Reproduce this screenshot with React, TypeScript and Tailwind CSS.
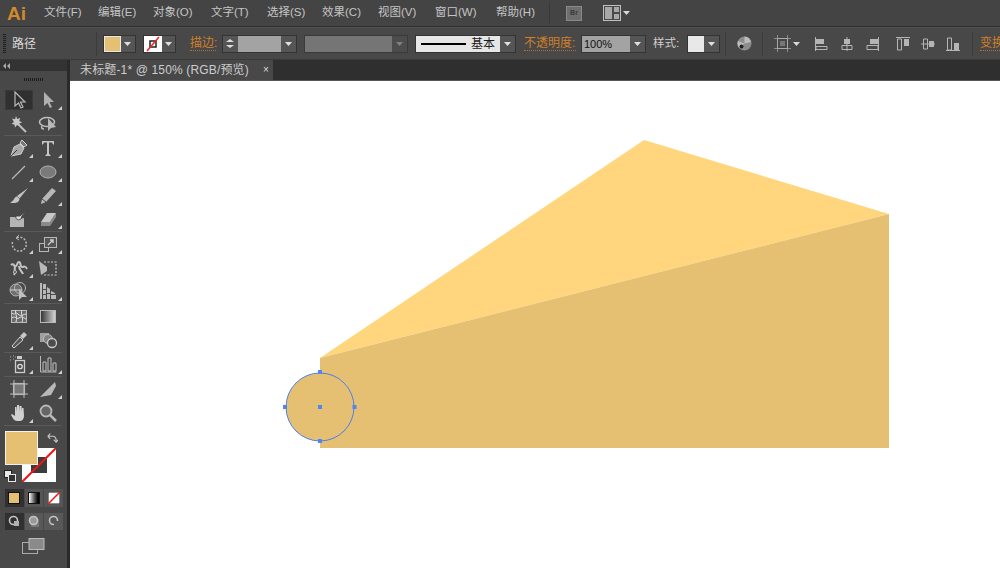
import React from "react";

const FONT = { fontFamily: '"Liberation Sans","Noto Sans CJK SC",sans-serif' };

function Menu({ label, w }: { label: string; w: string }) {
  return <span className={`${w} shrink-0 text-[11.5px] leading-none text-[#c4c4c4] whitespace-nowrap`}>{label}</span>;
}

function Caret({ color = "#d8d8d8" }: { color?: string }) {
  return (
    <svg width="7" height="4" viewBox="0 0 7 4" className="block">
      <path d="M0 0h7L3.5 4z" fill={color} />
    </svg>
  );
}

function DropBtn({ dim = false }: { dim?: boolean }) {
  return (
    <div className={`w-[15px] h-full flex items-center justify-center ${dim ? "bg-[#4c4c4c]" : "bg-[#555555]"}`}>
      <Caret color={dim ? "#808080" : "#e0e0e0"} />
    </div>
  );
}

function Sep({ cls }: { cls: string }) {
  return <div className={`w-px h-[24px] bg-[#3c3c3c] shrink-0 ${cls}`} />;
}

function Orange({ t, cls }: { t: string; cls: string }) {
  return (
    <span className={`text-[12px] leading-[14px] text-[#cf7f2a] border-b border-dotted border-[#b87028] whitespace-nowrap shrink-0 ${cls}`}>
      {t}
    </span>
  );
}

function AlignIcon({ d, r }: { d: string; r: React.ReactNode }) {
  return (
    <svg width="16" height="16" viewBox="0 0 16 16" className="shrink-0">
      <path d={d} stroke="#b4b4b4" strokeWidth="1" fill="none" />
      {r}
    </svg>
  );
}

const S = "#bdbdbd";
const icons: Record<string, React.ReactNode> = {
  select: <path d="M6 2v14l3.5-3 2.5 5 2-1-2.500-5H16z" fill="#2f2f2f" stroke="#b8b8b8" strokeWidth="1.2" />,
  direct: <path d="M6 2v14l3.5-3 2.5 5 2-1-2.500-5H16z" fill="#b0b0b0" />,
  wand: (
    <g>
      <path d="M9 10l8 8" stroke={S} strokeWidth="2" />
      <path d="M7 2l1.200 3 3-1-1 3 3 1.200-3 1.200.8 2.600-3-1-2 2.500-.5-3-3-.5 2.400-2L3 4.500l3 .7z" fill="#c8c8c8" />
    </g>
  ),
  lasso: (
    <g>
      <ellipse cx="9" cy="8" rx="7.500" ry="4.500" fill="none" stroke={S} strokeWidth="1.600" />
      <path d="M4 12c-1 2 0 3 2 3" fill="none" stroke={S} strokeWidth="1.500" />
      <path d="M10 4v13l3-3 5-1z" fill="#b8b8b8" />
    </g>
  ),
  pen: (
    <g>
      <path d="M2 18l3-9 6-3 4 4-3 6z" fill="#a8a8a8" stroke="#d0d0d0" strokeWidth="1" />
      <path d="M11 5l2-3 5 5-3 2z" fill="#777" stroke="#d0d0d0" strokeWidth="1" />
      <path d="M2 18l6-6" stroke="#3a3a3a" />
    </g>
  ),
  type: <path d="M4 3h12v3.500h-1L14 4.500h-3V16l1.500 1v1h-5v-1L9 16V4.500H6L5 6.500H4z" fill="#c4c4c4" />,
  line: <path d="M3 17L16 4" stroke="#b8b8b8" strokeWidth="1.300" />,
  ellipse: <ellipse cx="10" cy="10" rx="8" ry="6" fill="#7a7a7a" stroke="#b0b0b0" strokeWidth="1" />,
  brush: (
    <g fill="#c4c4c4">
      <path d="M19 2L8 10l2.500 2.500z" />
      <path d="M8 10.500c-3 0-2 4-7 6 4 1 9 1 9.500-3.500z" />
    </g>
  ),
  pencil: (
    <g>
      <path d="M14 2l4 3-10 11-5 2 1-5z" fill="#b8b8b8" />
      <path d="M4 13l4 3" stroke="#444" />
    </g>
  ),
  blob: (
    <g>
      <path d="M1 8l5 0 4 2 5-1v9H1z" fill="#b4b4b4" />
      <path d="M19 1l-8 6-4 0c-1 3 2 5 5 3l1-3z" fill="#d8d8d8" stroke="#3c3c3c" strokeWidth=".8" />
    </g>
  ),
  eraser: (
    <g>
      <path d="M9 4h9l-6 9H3z" fill="#c8c8c8" />
      <path d="M3 13h9v4H3zM12 13l6-9v4l-6 9z" fill="#8a8a8a" />
    </g>
  ),
  rotate: (
    <g fill="none" stroke="#b8b8b8" strokeWidth="1.500" strokeDasharray="2 1.500">
      <path d="M8 3.500A7 7 0 1 1 4 7" />
      <path d="M10 1l-3 3 3 2" strokeDasharray="none" strokeWidth="1" />
    </g>
  ),
  scale: (
    <g fill="none" stroke="#b8b8b8" strokeWidth="1">
      <rect x="1.500" y="9.500" width="9" height="8" />
      <rect x="6.500" y="3.500" width="12" height="10" fill="#555" />
      <path d="M10 11l5-5M12 6h3v3" strokeWidth="1.300" stroke="#d0d0d0" />
    </g>
  ),
  warp: (
    <g fill="none" stroke="#c4c4c4" strokeWidth="2">
      <path d="M2 7c3-3 3 3 5 1s1-4 3-4 1 5 3 5 3-2 5 2" />
      <path d="M6 8c-1 4 1 6-1 9M10 8c0 4 3 5 4 8" />
      <circle cx="6" cy="14" r="1.500" fill="#444" strokeWidth="1" />
    </g>
  ),
  free: (
    <g>
      <path d="M1 3l8 6v4l-6 4z" fill="#b8b8b8" />
      <path d="M6 4h12v13H6" fill="none" stroke="#c8c8c8" strokeWidth="1.200" strokeDasharray="2 1.500" />
    </g>
  ),
  builder: (
    <g>
      <circle cx="7" cy="9" r="6" fill="#707070" stroke="#b4b4b4" />
      <circle cx="11" cy="7" r="5.500" fill="none" stroke="#b4b4b4" />
      <path d="M1 9h12" stroke="#d0d0d0" />
      <path d="M10 8v11l3-3 5 0z" fill="#c0c0c0" />
    </g>
  ),
  persp: (
    <path
      d="M2 2h2v16H2zM5 3h3v5H5zM5 9h3v4H5zM5 14h3v4H5zM9 6l3 2v4H9zM9 13h3v5H9zM13 10l4 2v1h-4zM13 14h5v4h-5z"
      fill="#b8b8b8"
    />
  ),
  mesh: (
    <g>
      <rect x="2.500" y="4.500" width="15" height="12" fill="#6c6c6c" stroke="#bbb" />
      <path d="M3 7c3 3 3-2 6 1s3 1 8 0M3 12c4-3 4 2 7 0s3-1 7 1M7 4c-2 3 2 5 0 12M13 4c-2 4 2 8 0 12" stroke="#e0e0e0" fill="none" />
    </g>
  ),
  gradient: (
    <g>
      <defs>
        <linearGradient id="tg" x1="0" x2="1">
          <stop offset="0" stopColor="#303030" />
          <stop offset="1" stopColor="#d8d8d8" />
        </linearGradient>
      </defs>
      <rect x="2.500" y="4.500" width="15" height="12" fill="url(#tg)" stroke="#b8b8b8" />
    </g>
  ),
  dropper: (
    <g>
      <path d="M3 16l8-9 3 3-9 8z" fill="#555" stroke="#d0d0d0" />
      <path d="M11 6l4-4 3 3-4 4z" fill="#c8c8c8" />
    </g>
  ),
  blend: (
    <g>
      <rect x="2" y="3" width="9" height="9" fill="#a0a0a0" />
      <circle cx="10" cy="9" r="4.500" fill="#808080" stroke="#bbb" />
      <circle cx="14" cy="13" r="4.500" fill="#4c4c4c" stroke="#ccc" strokeWidth="1.300" />
    </g>
  ),
  spray: (
    <g>
      <rect x="8" y="2" width="5" height="3" fill="#ccc" />
      <rect x="6.500" y="6.500" width="9" height="12" fill="#4c4c4c" stroke="#ccc" strokeWidth="1.300" />
      <circle cx="11" cy="12.500" r="2.200" fill="none" stroke="#ddd" strokeWidth="1.300" />
      <path d="M1 3h1M4 2h1M1 6h1M4 5h1M6 3h1" stroke="#aaa" />
    </g>
  ),
  chart: (
    <g>
      <path d="M2.500 2v16h16" stroke="#b8b8b8" fill="none" />
      <path d="M5 8h3v9H5zM10 4h3v13h-3zM15 9h3v8h-3z" fill="none" stroke="#c0c0c0" />
    </g>
  ),
  artboard: (
    <g>
      <rect x="4.500" y="4.500" width="11" height="11" fill="#777" stroke="#b8b8b8" strokeWidth="1.200" />
      <path d="M1 5h18M1 15h18M5 1v18M15 1v18" stroke="#b8b8b8" strokeWidth="1" />
    </g>
  ),
  slice: <path d="M2 18L17 3l1 4-5 9z" fill="#b8b8b8" />,
  hand: (
    <path d="M8 18c-3 0-4-3-6-6l1-1 3 2V4h1.500l.5 5V2h2l.5 7V3h2l.5 6V5h1.500l.5 8c0 3-2 5-4 5z" fill="#d0d0d0" />
  ),
  zoom: (
    <g fill="none" stroke="#b8b8b8">
      <circle cx="8" cy="8" r="5.500" strokeWidth="1.800" fill="#666" />
      <path d="M12 12l6 6" strokeWidth="2.500" />
    </g>
  ),
};

function Tool({ name, flyout = true, active = false }: { name: string; flyout?: boolean; active?: boolean }) {
  return (
    <div
      className={`relative w-[28px] h-[20px] flex items-center justify-center ${
        active ? "bg-[#303030] border border-[#3a3a3a]" : ""
      }`}
    >
      <svg width="20" height="20" viewBox="0 0 20 20">
        {icons[name]}
      </svg>
      {flyout && (
        <div className="absolute right-0 bottom-0 w-0 h-0 border-l-[4px] border-l-transparent border-b-[4px] border-b-[#d0d0d0]" />
      )}
    </div>
  );
}

function Row({ a, b, af = true, bf = true, active = false }: { a: string; b: string; af?: boolean; bf?: boolean; active?: boolean }) {
  return (
    <div className="flex h-[23.7px] items-center pl-[5px] gap-[1px] shrink-0">
      <Tool name={a} flyout={af} active={active} />
      <Tool name={b} flyout={bf} />
    </div>
  );
}

function ToolSep() {
  return <div className="h-px bg-[#5a5a5a] mx-[4px] w-[58px] shrink-0" />;
}

export default function App() {
  return (
    <div className="w-[1000px] h-[568px] overflow-hidden flex flex-col bg-white" style={FONT}>
      {/* menu bar */}
      <div className="h-[27px] shrink-0 bg-[#444444] border-b border-[#2e2e2e] flex items-center">
        <span className="w-[44px] shrink-0 pl-[7px] text-[19px] font-bold leading-none text-[#d08a2c]">Ai</span>
        <Menu label="文件(F)" w="w-[54px]" />
        <Menu label="编辑(E)" w="w-[55px]" />
        <Menu label="对象(O)" w="w-[58px]" />
        <Menu label="文字(T)" w="w-[56px]" />
        <Menu label="选择(S)" w="w-[55px]" />
        <Menu label="效果(C)" w="w-[56px]" />
        <Menu label="视图(V)" w="w-[57px]" />
        <Menu label="窗口(W)" w="w-[61px]" />
        <Menu label="帮助(H)" w="w-[53px]" />
        <div className="w-px h-[20px] bg-[#383838] shrink-0" />
        <div className="ml-[16px] w-[16px] h-[15px] bg-[#6e6e6e] border border-[#8a8a8a] flex items-center justify-center text-[7px] font-bold text-[#3a3a3a] shrink-0">
          Br
        </div>
        <div className="ml-[21px] shrink-0 flex items-center gap-[2px]">
          <svg width="18" height="16" viewBox="0 0 18 16">
            <rect x=".5" y=".5" width="17" height="15" fill="#4a4a4a" stroke="#c0c0c0" />
            <rect x="2" y="2" width="7" height="12" fill="#a8a8a8" />
            <rect x="11" y="2" width="5" height="5" fill="#a8a8a8" />
            <rect x="11" y="9" width="5" height="5" fill="#a8a8a8" />
          </svg>
          <Caret />
        </div>
      </div>

      {/* control bar */}
      <div className="h-[33px] shrink-0 bg-[#484848] border-t border-[#525252] border-b border-b-[#3a3a3a] flex items-center overflow-hidden">
        <div className="ml-[3px] w-[3px] h-[19px] shrink-0 bg-[repeating-linear-gradient(0deg,#1f1f1f_0_1px,transparent_1px_2px)]" />
        <span className="ml-[6px] w-[60px] text-[12px] text-[#d8d8d8] shrink-0">路径</span>
        <Sep cls="ml-[24px]" />
        <div className="ml-[6px] w-[33px] h-[18px] flex border border-[#333] shrink-0">
          <div className="w-[18px] bg-[#e5c073] border border-[#e8e8e8]" />
          <DropBtn />
        </div>
        <div className="ml-[7px] w-[33px] h-[18px] flex border border-[#333] shrink-0">
          <div className="w-[18px] bg-white shrink-0 flex items-center justify-center">
            <svg width="16" height="16" viewBox="0 0 16 16">
              <rect x="5" y="5" width="6" height="6" fill="none" stroke="#222" strokeWidth="1.500" />
              <path d="M2 15L14 1" stroke="#f02020" strokeWidth="1.500" />
            </svg>
          </div>
          <DropBtn />
        </div>
        <Orange t="描边:" cls="ml-[14px] w-[26px]" />
        <div className="ml-[6px] w-[75px] h-[18px] flex border border-[#333] shrink-0">
          <div className="w-[15px] flex flex-col items-center justify-center gap-[3px] bg-[#555]">
            <div className="w-0 h-0 border-x-[4px] border-x-transparent border-b-[3px] border-b-[#ddd]" />
            <div className="w-0 h-0 border-x-[4px] border-x-transparent border-t-[3px] border-t-[#ddd]" />
          </div>
          <div className="w-[45px] bg-[#a3a3a3]" />
          <DropBtn />
        </div>
        <div className="ml-[7px] w-[104px] h-[18px] flex border border-[#3a3a3a] shrink-0">
          <div className="flex-1 bg-[#757575]" />
          <DropBtn dim />
        </div>
        <div className="ml-[7px] w-[101px] h-[18px] flex border border-[#333] shrink-0">
          <div className="w-[85px] bg-[#e6e6e6] flex items-center pl-[5px] gap-[5px]">
            <div className="w-[45px] h-[2px] bg-black" />
            <span className="text-[12px] leading-none text-[#1a1a1a]">基本</span>
          </div>
          <DropBtn />
        </div>
        <Orange t="不透明度:" cls="ml-[8px] w-[52px]" />
        <div className="ml-[5px] w-[65px] h-[18px] flex border border-[#333] shrink-0">
          <div className="w-[50px] bg-[#a3a3a3] text-[11px] leading-[16px] pl-[2px] text-[#111]">100%</div>
          <DropBtn />
        </div>
        <span className="ml-[7px] w-[27px] text-[11.5px] text-[#d0d0d0] shrink-0 whitespace-nowrap">样式:</span>
        <div className="ml-[7px] w-[33px] h-[18px] flex border border-[#333] shrink-0">
          <div className="w-[17px] bg-[#e8e8e8]" />
          <DropBtn />
        </div>
        <Sep cls="ml-[5px]" />
        <div className="ml-[11px] shrink-0">
          <svg width="15" height="15" viewBox="0 0 15 15" className="block">
            <circle cx="7.500" cy="7.500" r="7" fill="#8c8c8c" />
            <path d="M7.500 7.500L7.500 .5A7 7 0 0 1 14 6zM7.500 7.500L2 12A7 7 0 0 1 1 5z" fill="#bbbbbb" />
            <circle cx="4.500" cy="10.500" r="2" fill="#222" />
          </svg>
        </div>
        <Sep cls="ml-[10px]" />
        <div className="ml-[11px] flex items-center gap-[2px] shrink-0">
          <svg width="17" height="17" viewBox="0 0 17 17">
            <rect x="3.500" y="3.500" width="10" height="10" fill="none" stroke="#a8a8a8" />
            <path d="M6 6h5v5H6z" fill="#777" />
            <path d="M0 3.500h3M14 3.500h3M0 13.500h3M14 13.500h3M3.500 0v3M13.500 0v3M3.500 14v3M13.500 14v3" stroke="#8a8a8a" />
          </svg>
          <Caret />
        </div>
        <div className="ml-[14px] flex items-center gap-[9px] shrink-0">
          <AlignIcon d="M1.500 1v14M2 10.500h11v3H2z" r={<rect x="2" y="3" width="8" height="5" fill="#b4b4b4" />} />
          <AlignIcon d="M8 1v14M3 9.500h10v4H3z" r={<rect x="5" y="3" width="6" height="5" fill="#b4b4b4" />} />
          <AlignIcon d="M14.500 1v14M3 9.500h11v4H3z" r={<rect x="6" y="3" width="8" height="5" fill="#b4b4b4" />} />
        </div>
        <div className="ml-[15px] flex items-center gap-[9px] shrink-0">
          <AlignIcon d="M1 1.500h14M2.500 3h4v11h-4z" r={<rect x="9" y="3" width="5" height="7" fill="#b4b4b4" />} />
          <AlignIcon d="M1 8h14M3.500 3h4v10h-4z" r={<rect x="9" y="5" width="5" height="6" fill="#b4b4b4" />} />
          <AlignIcon d="M1 14.500h14M2.500 2h4v12h-4z" r={<rect x="9" y="7" width="5" height="7" fill="#b4b4b4" />} />
        </div>
        <Sep cls="ml-[11px]" />
        <Orange t="变换" cls="ml-[7px]" />
      </div>

      {/* body */}
      <div className="flex-1 flex min-h-0">
        {/* tool panel */}
        <div className="w-[70px] shrink-0 bg-[#484848] border-r-[3px] border-[#2a2a2a] flex flex-col">
          <div className="h-[11px] bg-[#333333] flex items-center pl-[3px] shrink-0">
            <span className="flex">
              <span className="w-0 h-0 border-y-[3px] border-y-transparent border-r-[3px] border-r-[#a8a8a8]" />
              <span className="w-0 h-0 ml-[1px] border-y-[3px] border-y-transparent border-r-[3px] border-r-[#a8a8a8]" />
            </span>
          </div>
          <div className="flex justify-center h-[17px] items-center shrink-0">
            <div className="w-[19px] h-[3px] bg-[repeating-linear-gradient(90deg,#1c1c1c_0_1px,transparent_1px_2px)]" />
          </div>
          <Row a="select" b="direct" af={false} active />
          <Row a="wand" b="lasso" af={false} bf={false} />
          <ToolSep />
          <Row a="pen" b="type" />
          <Row a="line" b="ellipse" />
          <Row a="brush" b="pencil" af={false} />
          <Row a="blob" b="eraser" af={false} />
          <ToolSep />
          <Row a="rotate" b="scale" />
          <Row a="warp" b="free" bf={false} />
          <Row a="builder" b="persp" />
          <ToolSep />
          <Row a="mesh" b="gradient" af={false} bf={false} />
          <Row a="dropper" b="blend" bf={false} />
          <ToolSep />
          <Row a="spray" b="chart" />
          <ToolSep />
          <Row a="artboard" b="slice" af={false} />
          <Row a="hand" b="zoom" bf={false} />
          <ToolSep />
          {/* colour */}
          <div className="relative h-[58px] shrink-0 mt-[5px]">
            <div className="absolute left-[22px] top-[17px] w-[34px] h-[34px] bg-white">
              <svg width="34" height="34" viewBox="0 0 34 34" className="block">
                <rect x="9" y="9" width="16" height="16" fill="#3c3c3c" />
                <path d="M0 34L34 0" stroke="#f01414" strokeWidth="2" />
              </svg>
            </div>
            <div className="absolute left-[5px] top-0 w-[33px] h-[34px] bg-[#e5c073] border border-[#f0f0f0]" />
            <svg width="12" height="12" viewBox="0 0 14 14" className="absolute left-[46px] top-[1px]">
              <path d="M2 5h6c3 0 4 2 4 6M2 5l3-3M2 5l3 3M12 12l-3-3M12 12l2-3" fill="none" stroke="#c8c8c8" strokeWidth="1.300" />
            </svg>
            <svg width="12" height="12" viewBox="0 0 12 12" className="absolute left-[4px] top-[39px]">
              <rect x=".5" y=".5" width="7" height="7" fill="#e8e8e8" stroke="#222" />
              <rect x="4.500" y="4.500" width="7" height="7" fill="#333" stroke="#e8e8e8" />
            </svg>
          </div>
          <div className="mx-[5px] w-[58px] h-[18px] flex gap-[1px] shrink-0">
            <div className="w-[19px] bg-[#303030] flex items-center justify-center">
              <div className="w-[12px] h-[12px] bg-[#e5c073] border border-[#111]" />
            </div>
            <div className="w-[19px] bg-[#555] flex items-center justify-center">
              <div className="w-[12px] h-[12px] bg-gradient-to-r from-white to-black border border-[#111]" />
            </div>
            <div className="w-[19px] bg-[#555] flex items-center justify-center">
              <svg width="12" height="12" viewBox="0 0 12 12">
                <rect width="12" height="12" fill="#fff" stroke="#111" />
                <path d="M0 12L12 0" stroke="#f01414" strokeWidth="1.500" />
              </svg>
            </div>
          </div>
          <div className="mt-[6px] mx-[5px] w-[58px] h-[17px] flex gap-[1px] shrink-0">
            {[0, 1, 2].map((i) => (
              <div key={i} className={`w-[19px] flex items-center justify-center ${i === 0 ? "bg-[#303030]" : "bg-[#585858]"}`}>
                <svg width="12" height="12" viewBox="0 0 12 12">
                  {i === 1 && <rect x="3" y="4" width="8" height="8" fill="#777" />}
                  <circle cx="5.500" cy="5.500" r="4" fill={i === 1 ? "#999" : "none"} stroke="#c4c4c4" strokeWidth="1.600" />
                  {i !== 1 && <rect x="6" y="6" width="5" height="5" fill={i === 0 ? "#b0b0b0" : "#585858"} />}
                </svg>
              </div>
            ))}
          </div>
          <div className="mt-[8px] flex justify-center shrink-0">
            <svg width="23" height="16" viewBox="0 0 23 16">
              <rect x=".5" y="4.500" width="15" height="11" fill="#484848" stroke="#aaa" />
              <rect x="7" y=".5" width="15" height="11" fill="#8a8a8a" stroke="#bbb" />
            </svg>
          </div>
        </div>

        {/* document */}
        <div className="flex-1 min-w-0 flex flex-col">
          <div className="h-[21px] shrink-0 bg-[#2f2f2f] border-b border-[#555] flex">
            <div className="w-[203px] bg-[#484848] flex items-center pl-[10px] shrink-0">
              <span className="w-[183px] shrink-0 text-[12px] tracking-[0.15px] text-[#cccccc] whitespace-nowrap">
                未标题-1* @ 150% (RGB/预览)
              </span>
              <span className="text-[10px] leading-none text-[#dddddd]">×</span>
            </div>
          </div>
          <div className="flex-1 min-h-0 bg-white">
            <svg width="930" height="487" viewBox="70 81 930 487" className="block">
              <path d="M320 358L644 140L889 214Z" fill="#ffd67d" />
              <path d="M320 358L889 214V448H320Z" fill="#e5c073" />
              <circle cx="320" cy="407" r="34" fill="#e5c073" stroke="#4f7fe8" strokeWidth="1" />
              {[
                [320, 372],
                [320, 441],
                [285, 407],
                [354.5, 407],
                [320, 407],
              ].map(([x, y]) => (
                <rect key={`${x}-${y}`} x={x - 2} y={y - 2} width="4" height="4" fill="#4f85f5" />
              ))}
            </svg>
          </div>
        </div>
      </div>
    </div>
  );
}
